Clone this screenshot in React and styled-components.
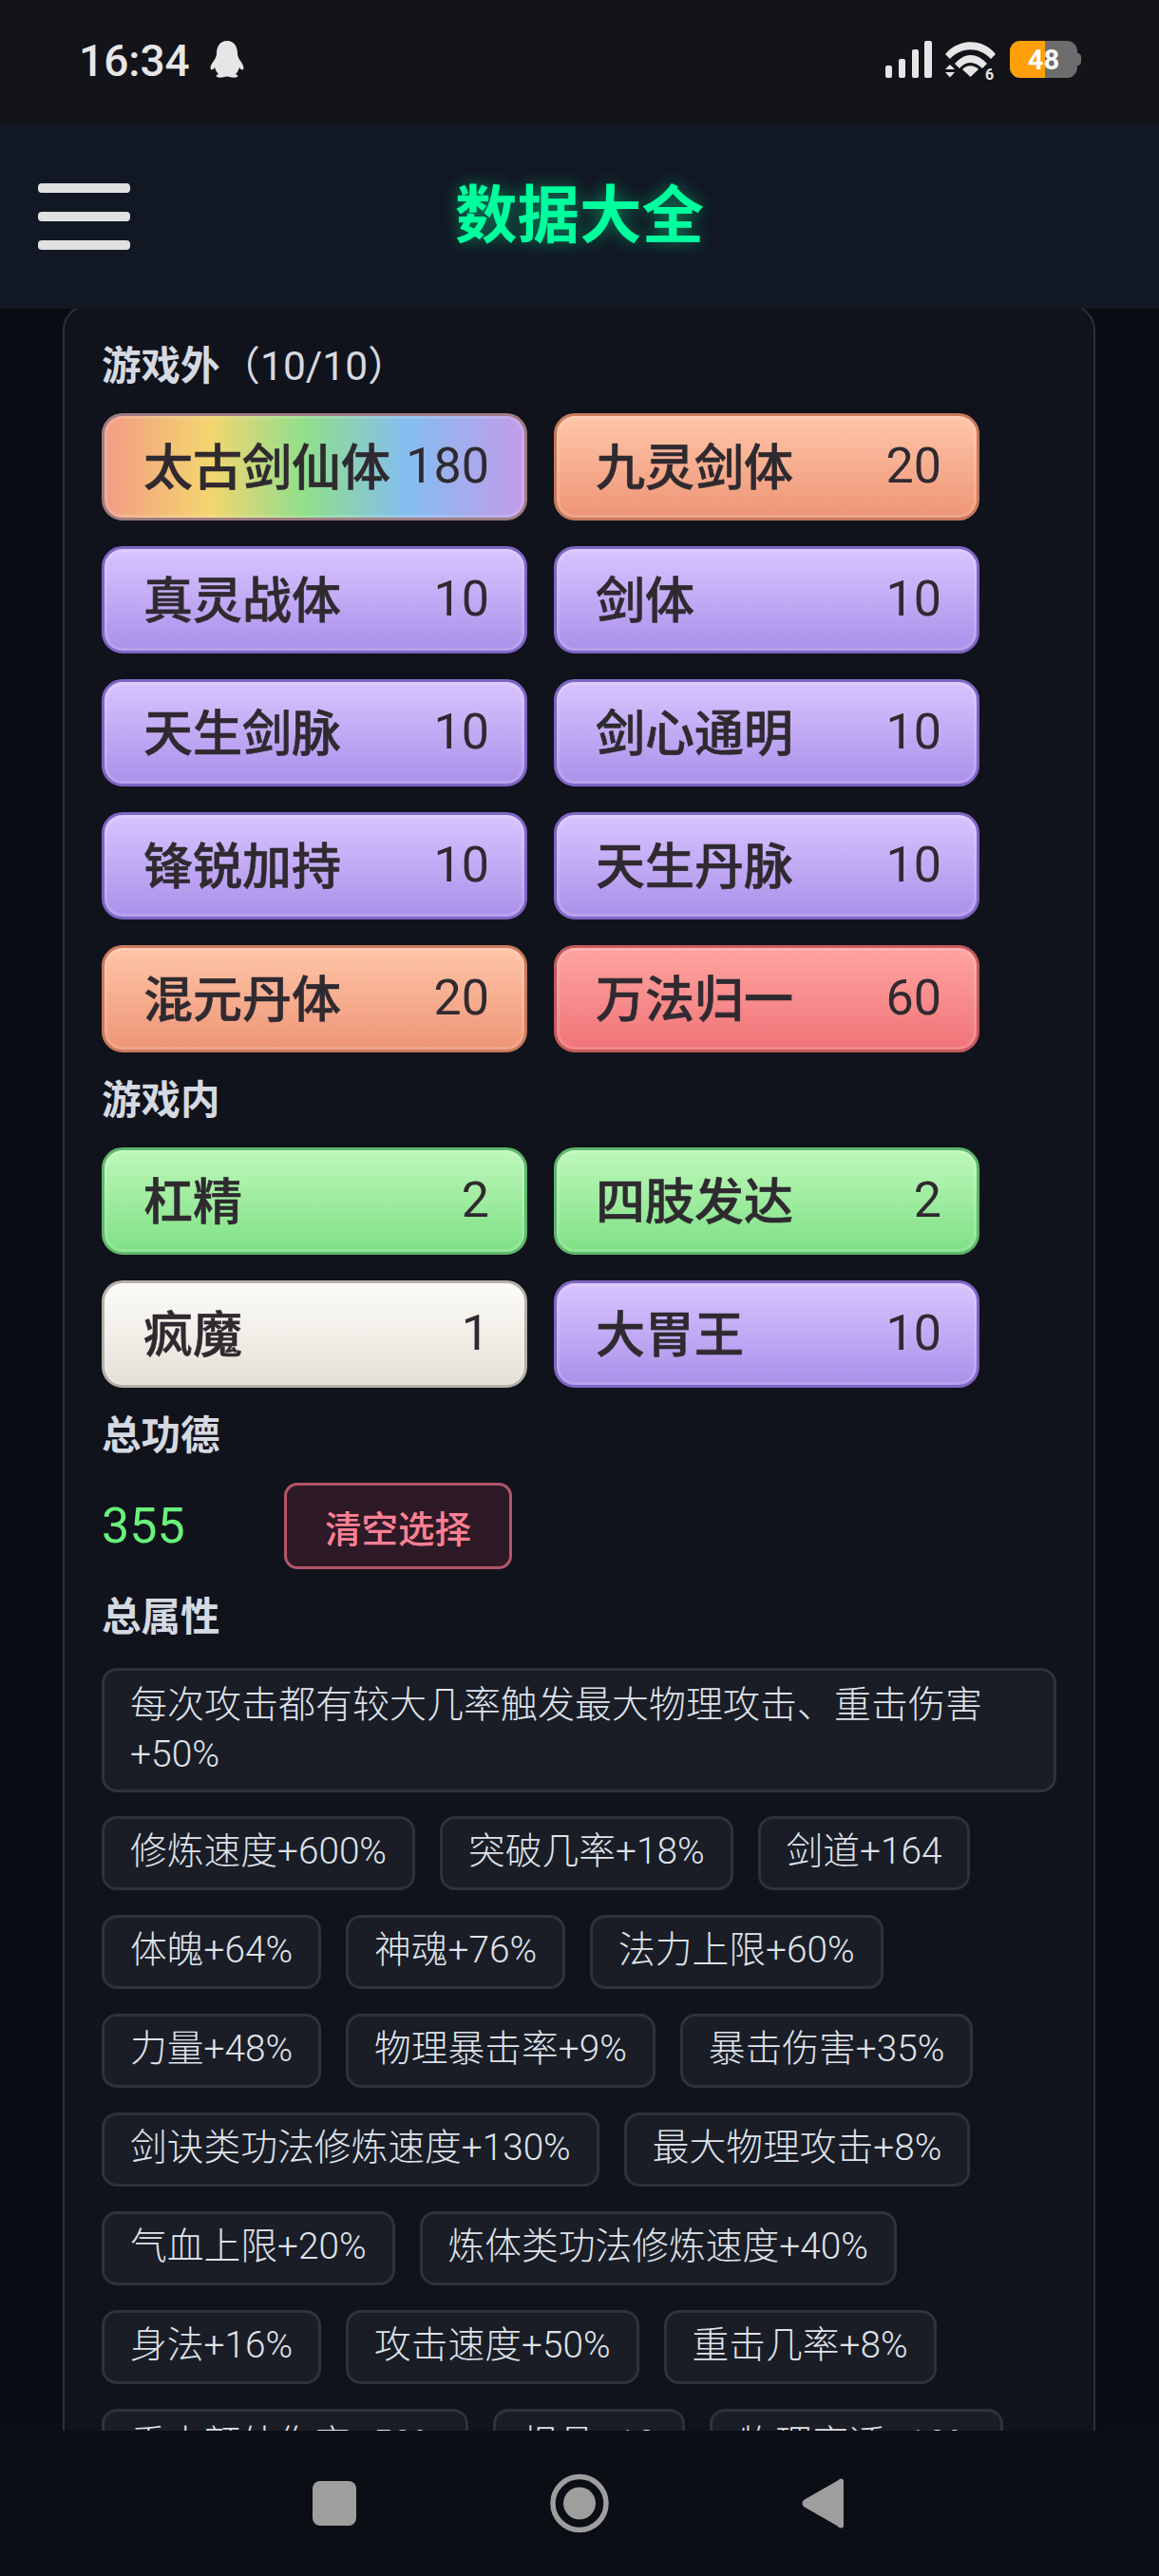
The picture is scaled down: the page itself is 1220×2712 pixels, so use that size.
import React from 'react';
import styled, { createGlobalStyle } from 'styled-components';

const outerTalents = [
  { name: '太古剑仙体', points: 180, tier: 'rainbow' },
  { name: '九灵剑体', points: 20, tier: 'orange' },
  { name: '真灵战体', points: 10, tier: 'purple' },
  { name: '剑体', points: 10, tier: 'purple' },
  { name: '天生剑脉', points: 10, tier: 'purple' },
  { name: '剑心通明', points: 10, tier: 'purple' },
  { name: '锋锐加持', points: 10, tier: 'purple' },
  { name: '天生丹脉', points: 10, tier: 'purple' },
  { name: '混元丹体', points: 20, tier: 'orange' },
  { name: '万法归一', points: 60, tier: 'red' },
];

const innerTalents = [
  { name: '杠精', points: 2, tier: 'green' },
  { name: '四肢发达', points: 2, tier: 'green' },
  { name: '疯魔', points: 1, tier: 'white' },
  { name: '大胃王', points: 10, tier: 'purple' },
];

const stats = [
  '修炼速度+600%',
  '突破几率+18%',
  '剑道+164',
  '体魄+64%',
  '神魂+76%',
  '法力上限+60%',
  '力量+48%',
  '物理暴击率+9%',
  '暴击伤害+35%',
  '剑诀类功法修炼速度+130%',
  '最大物理攻击+8%',
  '气血上限+20%',
  '炼体类功法修炼速度+40%',
  '身法+16%',
  '攻击速度+50%',
  '重击几率+8%',
  '重击额外伤害+50%',
  '根骨+12',
  '物理穿透+10%',
];

const tiers = {
  rainbow: {
    border: '#9c7c80',
    background: 'linear-gradient(90deg, #f39c85 0%, #f4d56f 25%, #8fdf8c 48%, #84bdf0 72%, #c39bea 100%)',
  },
  orange: { border: '#c9795c', background: 'linear-gradient(180deg, #ffc5a8 0%, #ee9576 100%)' },
  purple: { border: '#7e66c6', background: 'linear-gradient(180deg, #d8c4ff 0%, #ab90ea 100%)' },
  red: { border: '#c45a5c', background: 'linear-gradient(180deg, #ffa5a1 0%, #f07377 100%)' },
  green: { border: '#5fb76e', background: 'linear-gradient(180deg, #bdf8b8 0%, #7fe086 100%)' },
  white: { border: '#b5b1a8', background: 'linear-gradient(180deg, #fdfcf7 0%, #e4e0d8 100%)' },
};

const GlobalStyle = createGlobalStyle`
  html, body {
    margin: 0;
    padding: 0;
    background: #0b0e14;
  }
  * {
    box-sizing: border-box;
  }
`;

const Phone = styled.div`
  width: 1220px;
  height: 2712px;
  display: flex;
  flex-direction: column;
  overflow: hidden;
  background: #0b0d14;
  font-family: Roboto, 'Noto Sans CJK SC', sans-serif;
`;

const StatusBar = styled.div`
  height: 130px;
  flex: none;
  display: flex;
  align-items: flex-start;
  justify-content: space-between;
  padding: 43px 82px 0 83px;
  background: #121419;
`;

const StatusLeft = styled.div`
  display: flex;
  align-items: center;
  gap: 21px;
  height: 39px;
`;

const Clock = styled.span`
  padding-top: 4px;
  font-size: 46px;
  line-height: 39px;
  font-weight: 500;
  color: #e6e6e6;
`;

const StatusRight = styled.div`
  display: flex;
  align-items: flex-start;
  gap: 14px;
  height: 46px;
`;

const Battery = styled.div`
  position: relative;
  width: 75px;
  height: 39px;
`;

const BatteryLevel = styled.span`
  position: absolute;
  inset: 0;
  display: flex;
  align-items: center;
  justify-content: center;
  padding-right: 4px;
  font-size: 29px;
  font-weight: 700;
  color: #ffffff;
`;

const Header = styled.header`
  position: relative;
  z-index: 2;
  height: 195px;
  flex: none;
  display: flex;
  align-items: center;
  justify-content: center;
  background: #111723;
`;

const MenuButton = styled.div`
  position: absolute;
  left: 40px;
  top: 63px;
  width: 97px;
  display: flex;
  flex-direction: column;
  gap: 20px;
`;

const MenuBar = styled.span`
  height: 10px;
  border-radius: 4px;
  background: #e0e0e0;
`;

const Title = styled.h1`
  margin: 0;
  font-size: 65.5px;
  line-height: 90px;
  font-weight: 700;
  color: #00ff9d;
  text-shadow: 0 0 18px rgba(0, 255, 157, 0.45);
`;

const Content = styled.main`
  flex: 1;
  min-height: 0;
  overflow: hidden;
  padding: 0 67px 0 66px;
`;

const Card = styled.section`
  margin-top: -5px;
  padding: 35px 39px 40px 39px;
  background: #10131b;
  border: 2px solid #2d3038;
  border-radius: 28px;
`;

const SectionLabel = styled.div`
  height: 56px;
  padding-top: 2px;
  font-size: 41.5px;
  line-height: 54px;
  font-weight: 700;
  color: #d5d9e2;
  margin-bottom: 22px;
`;

const LabelCount = styled.span`
  font-size: 42.5px;
  font-weight: 400;
`;

const TalentGrid = styled.div`
  display: grid;
  grid-template-columns: 448px 448px;
  gap: 27px 28px;
  margin-bottom: 22px;
`;

const Talent = styled.div`
  height: 113px;
  display: flex;
  align-items: center;
  justify-content: space-between;
  padding: 0 37px 3px 41px;
  border: 3px solid ${(p) => tiers[p.$tier].border};
  border-radius: 22px;
  background: ${(p) => tiers[p.$tier].background};
  box-shadow: inset 0 0 0 3px rgba(255, 255, 255, 0.15);
  color: #2f2a30;
`;

const TalentName = styled.span`
  margin-bottom: 3px;
  font-size: 52px;
  font-weight: 500;
  -webkit-text-stroke: 0.6px #2f2a30;
`;

const TalentPoints = styled.span`
  font-size: 52px;
  font-weight: 400;
`;

const TotalRow = styled.div`
  display: flex;
  align-items: center;
  gap: 104px;
  margin-bottom: 22px;
`;

const TotalValue = styled.span`
  width: 88px;
  font-size: 52px;
  color: #69f27b;
`;

const ClearButton = styled.div`
  width: 240px;
  height: 91px;
  display: flex;
  align-items: center;
  justify-content: center;
  border: 3px solid #b4556b;
  border-radius: 14px;
  background: #2e1a27;
  font-size: 38.5px;
  font-weight: 500;
  color: #ff8095;
`;

const StatLong = styled.div`
  width: 1005px;
  height: 131px;
  margin-top: 26px;
  margin-bottom: 25px;
  padding: 10px 27px 11px;
  border: 3px solid #2f323b;
  border-radius: 16px;
  background: #1a1d26;
  font-size: 39px;
  line-height: 52px;
  font-weight: 300;
  color: #dfe3ea;
`;

const StatList = styled.div`
  display: flex;
  flex-wrap: wrap;
  gap: 26px;
  width: 1005px;
`;

const StatTag = styled.span`
  height: 78px;
  display: flex;
  align-items: center;
  padding: 0 27px 13px;
  border: 3px solid #2f323b;
  border-radius: 16px;
  background: #1a1d26;
  font-size: 38.75px;
  font-weight: 300;
  color: #dfe3ea;
`;

const BottomNav = styled.nav`
  position: relative;
  z-index: 2;
  height: 153px;
  flex: none;
  display: flex;
  align-items: center;
  padding: 0 332px 0 329px;
  justify-content: space-between;
  background: #0b0e14;
`;

const SignalIcon = () => (
  <svg width="49" height="39" viewBox="0 0 49 39" fill="#e6e6e6">
    <rect x="0" y="26" width="7" height="13" rx="2" />
    <rect x="14" y="19" width="7" height="20" rx="2" />
    <rect x="28" y="9" width="7" height="30" rx="2" />
    <rect x="41" y="0" width="8" height="39" rx="2" />
  </svg>
);

const WifiIcon = () => (
  <svg width="54" height="46" viewBox="0 0 54 46" fill="#e6e6e6">
    <path d="M0 14 C14 -3 40 -3 53 14 L48 19 C36 6 17 6 5 19 Z" />
    <path d="M10 24 C20 12 33 12 44 24 L39 29 C31 21 22 21 15 29 Z" />
    <path d="M18 30 C23 25 30 25 35 30 L26.500 38 Z" />
    <path d="M0 30 L5 25 L10 30 Z" />
    <path d="M0 33 L10 33 L5 38.500 Z" />
    <text x="42" y="41" fontSize="16" fontWeight="700" fontFamily="Roboto, sans-serif">6</text>
  </svg>
);

const BatteryIcon = () => (
  <svg width="75" height="39" viewBox="0 0 75 39">
    <rect x="0" y="0" width="71" height="39" rx="11" fill="#6d6d6d" />
    <path d="M11 0 H37 V39 H11 A11 11 0 0 1 0 28 V11 A11 11 0 0 1 11 0 Z" fill="#ff9f0a" />
    <path d="M71 13 C74 13 75 15 75 17 V22 C75 24 74 26 71 26 Z" fill="#6d6d6d" />
  </svg>
);

const PenguinIcon = () => (
  <svg width="36" height="39" viewBox="0 0 36 39" fill="#e6e6e6">
    <path d="M18 0 C26 0 29 7 29 13 C29 16 30 18 32 21 C35 25 36 28 35 30 C34 31 32 30 31 28 C30 31 29 33 27 35 C30 36 30 38 27 38.500 C24 39 21 38 18 37.500 C15 38 12 39 9 38.500 C6 38 6 36 9 35 C7 33 6 31 5 28 C4 30 2 31 1 30 C0 28 1 25 4 21 C6 18 7 16 7 13 C7 7 10 0 18 0 Z" />
  </svg>
);

const SquareIcon = () => (
  <svg width="46" height="47" viewBox="0 0 46 47">
    <rect width="46" height="47" rx="8" fill="#9e9e9e" />
  </svg>
);

const CircleIcon = () => (
  <svg width="62" height="63" viewBox="0 0 62 63">
    <circle cx="31" cy="31.500" r="28" fill="none" stroke="#9e9e9e" strokeWidth="5.500" />
    <circle cx="31" cy="31.500" r="17" fill="#9e9e9e" />
  </svg>
);

const BackIcon = () => (
  <svg width="44" height="53" viewBox="0 0 44 53">
    <path d="M41 0.500 Q44 0 44 3 V50 Q44 53 41 52.500 Q39 52 37 50 L2 30 Q-1 26.500 2 23 L37 3 Q39 1 41 0.500 Z" fill="#9e9e9e" />
  </svg>
);

const TalentButton = ({ name, points, tier }) => (
  <Talent $tier={tier}>
    <TalentName>{name}</TalentName>
    <TalentPoints>{points}</TalentPoints>
  </Talent>
);

const App = () => {
  return (
    <Phone>
      <GlobalStyle />
      <StatusBar>
        <StatusLeft>
          <Clock>16:34</Clock>
          <PenguinIcon />
        </StatusLeft>
        <StatusRight>
          <SignalIcon />
          <WifiIcon />
          <Battery>
            <BatteryIcon />
            <BatteryLevel>48</BatteryLevel>
          </Battery>
        </StatusRight>
      </StatusBar>
      <Header>
        <MenuButton>
          <MenuBar />
          <MenuBar />
          <MenuBar />
        </MenuButton>
        <Title>数据大全</Title>
      </Header>
      <Content>
        <Card>
          <SectionLabel>
            游戏外<LabelCount>（10/10）</LabelCount>
          </SectionLabel>
          <TalentGrid>
            {outerTalents.map((t) => (
              <TalentButton key={t.name} {...t} />
            ))}
          </TalentGrid>
          <SectionLabel>游戏内</SectionLabel>
          <TalentGrid>
            {innerTalents.map((t) => (
              <TalentButton key={t.name} {...t} />
            ))}
          </TalentGrid>
          <SectionLabel>总功德</SectionLabel>
          <TotalRow>
            <TotalValue>355</TotalValue>
            <ClearButton>清空选择</ClearButton>
          </TotalRow>
          <SectionLabel>总属性</SectionLabel>
          <StatLong>每次攻击都有较大几率触发最大物理攻击、重击伤害+50%</StatLong>
          <StatList>
            {stats.map((s) => (
              <StatTag key={s}>{s}</StatTag>
            ))}
          </StatList>
        </Card>
      </Content>
      <BottomNav>
        <SquareIcon />
        <CircleIcon />
        <BackIcon />
      </BottomNav>
    </Phone>
  );
};

export default App;
